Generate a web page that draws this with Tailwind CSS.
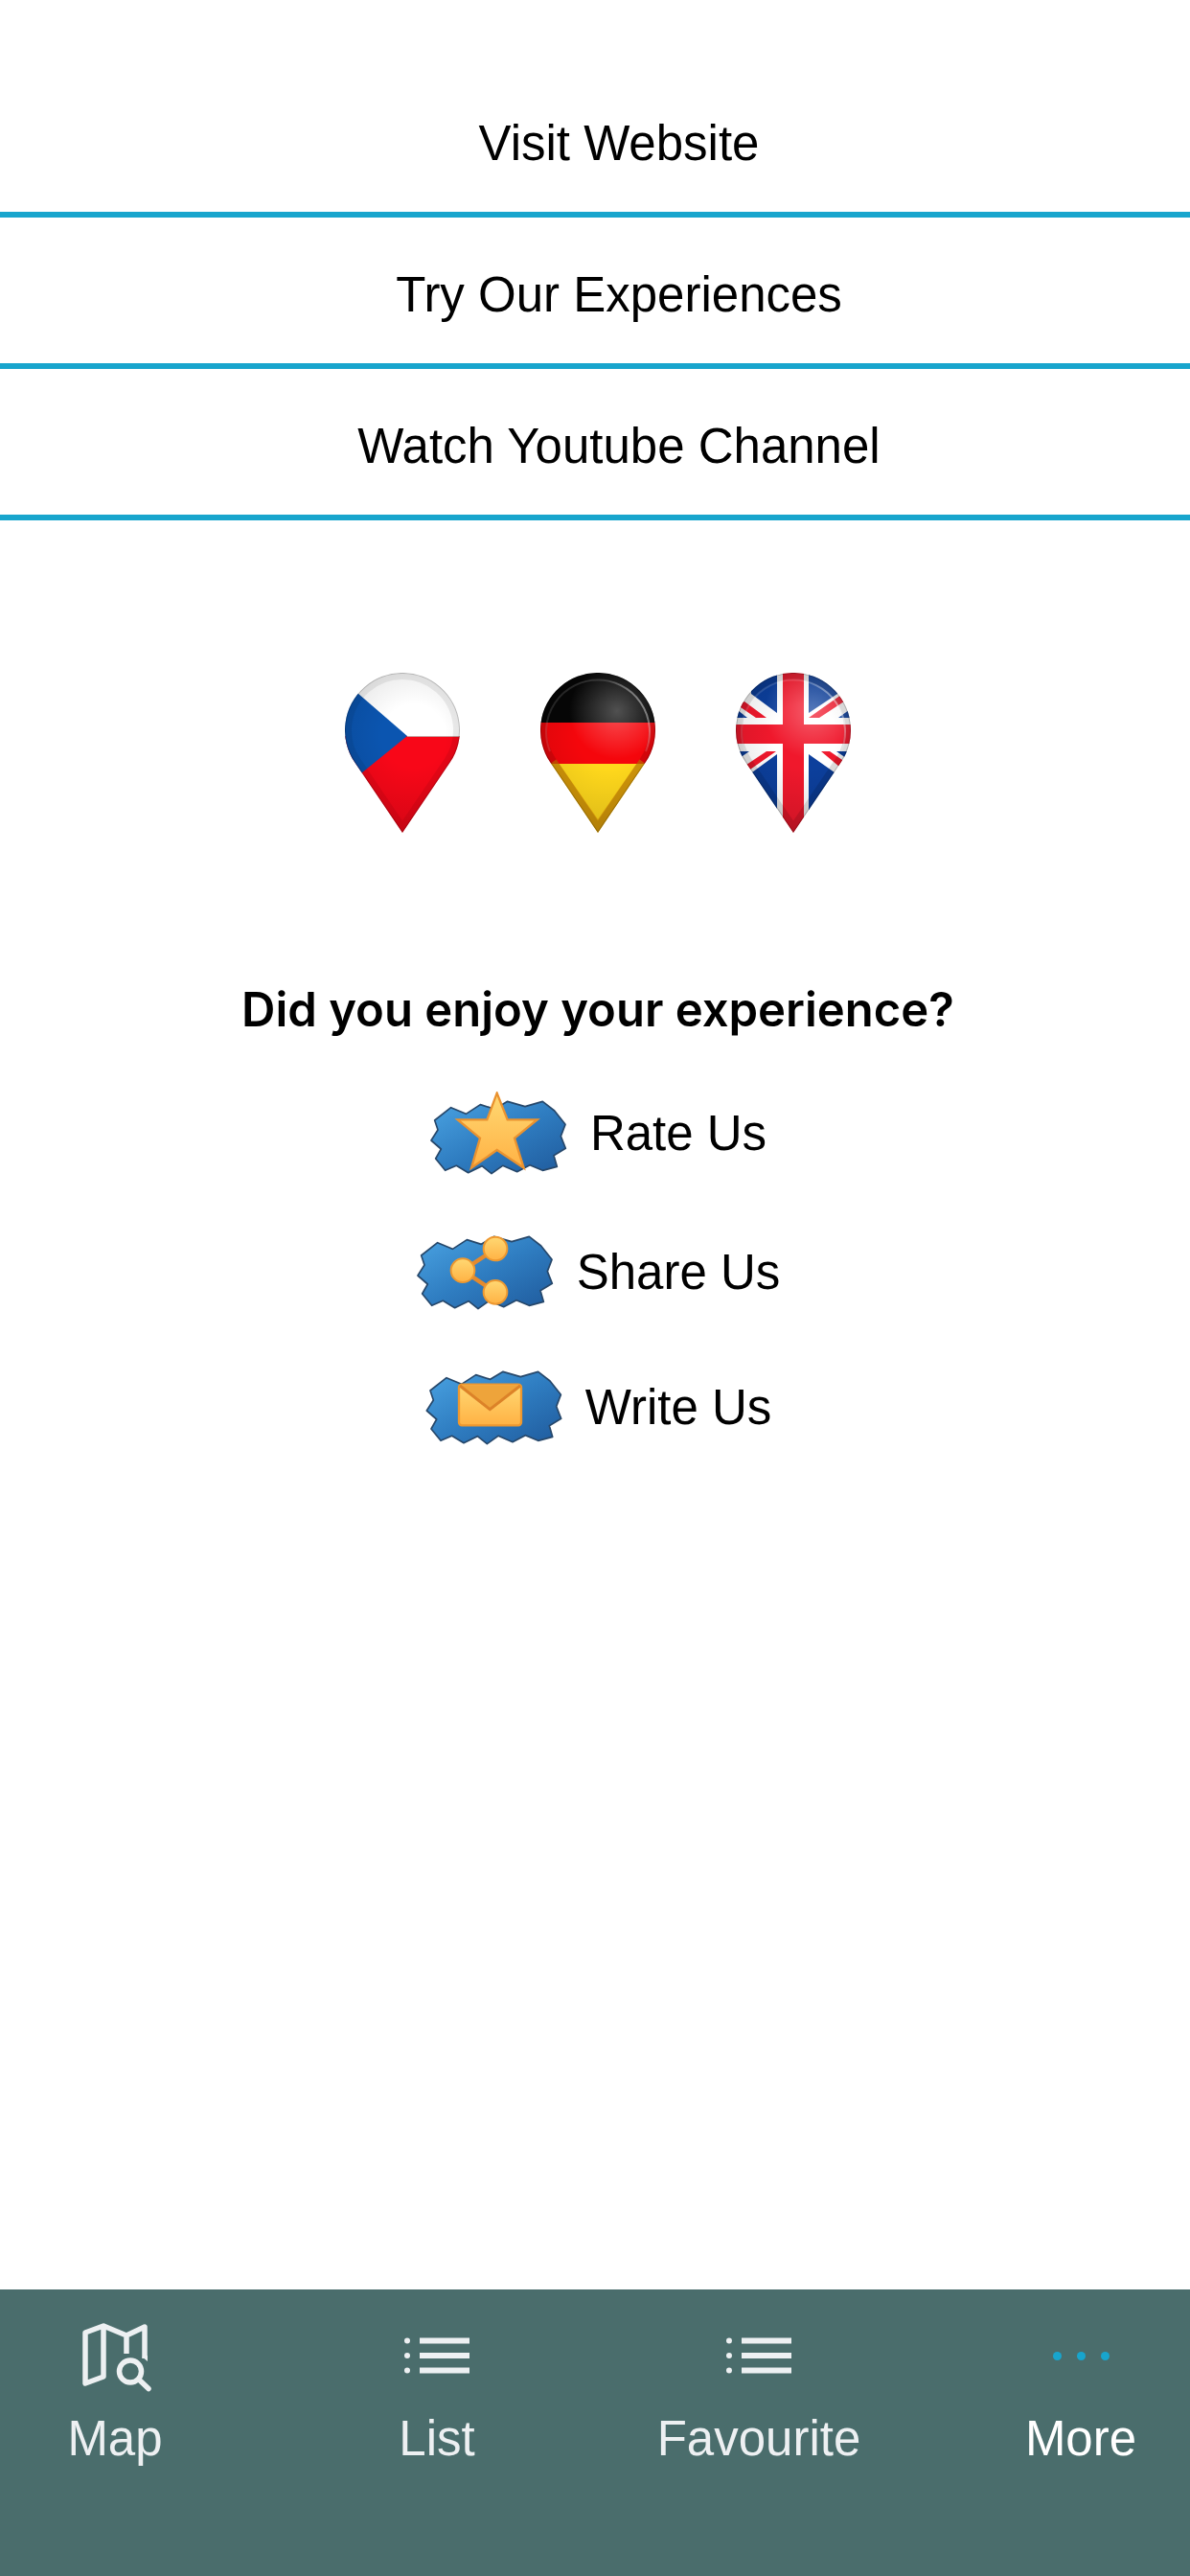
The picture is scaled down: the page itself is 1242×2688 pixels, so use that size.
<!DOCTYPE html>
<html lang="en">
<head>
<meta charset="utf-8">
<meta name="viewport" content="width=device-width, initial-scale=1">
<title>More</title>
<script src="https://cdn.jsdelivr.net/npm/@tailwindcss/browser@4"></script>
</head>
<body class="flex min-h-screen flex-col bg-white font-['Liberation_Sans',Arial,sans-serif] text-[51px] leading-[60px] text-black">

<!-- Shared shapes and paints -->
<svg class="absolute size-0" aria-hidden="true">
  <defs>
    <path id="pin" d="M60 167 L10.3 93.6 A60 60 0 1 1 109.7 93.6 Z"/>
    <clipPath id="pin-clip"><use href="#pin"/></clipPath>
    <radialGradient id="shine" gradientUnits="userSpaceOnUse" cx="80" cy="40" r="50">
      <stop offset="0" stop-color="#fff" stop-opacity=".3"/>
      <stop offset="1" stop-color="#fff" stop-opacity="0"/>
    </radialGradient>
    <radialGradient id="shade" gradientUnits="userSpaceOnUse" cx="72" cy="66" r="110">
      <stop offset=".3" stop-color="#000" stop-opacity="0"/>
      <stop offset="1" stop-color="#000" stop-opacity=".16"/>
    </radialGradient>
    <linearGradient id="rim" x1="0" y1=".6" x2="1" y2=".2">
      <stop offset="0" stop-color="#fff" stop-opacity=".12"/>
      <stop offset=".7" stop-color="#fff" stop-opacity=".15"/>
      <stop offset="1" stop-color="#fff" stop-opacity=".6"/>
    </linearGradient>
    <g id="gloss">
      <use href="#pin" fill="url(#shine)"/>
      <use href="#pin" fill="url(#shade)"/>
      <use href="#pin" fill="none" stroke="#000" stroke-opacity=".12" stroke-width="14"/>
      <path d="M10 82 A54 54 0 1 1 110 82" fill="none" stroke="url(#rim)" stroke-width="2"/>
      <use href="#pin" fill="none" stroke="#000" stroke-opacity=".2" stroke-width="2"/>
    </g>
    <linearGradient id="sea" x1="0" y1="0" x2="1" y2="1">
      <stop offset="0" stop-color="#4aa3e2"/>
      <stop offset=".5" stop-color="#2f7dc1"/>
      <stop offset="1" stop-color="#1f5a9c"/>
    </linearGradient>
    <linearGradient id="gold" x1="0" y1="0" x2="0" y2="1">
      <stop offset="0" stop-color="#ffd873"/>
      <stop offset="1" stop-color="#ffb244"/>
    </linearGradient>
    <path id="badge" d="M138 110 L185 130 L230 101 L275 115 L315 91 L370 107 L425 91 L462 120 L496 163 L482 200 L497 238 L460 260 L470 295 L425 307 L385 290 L345 311 L300 292 L265 317 L235 293 L192 314 L155 292 L120 307 L90 270 L107 240 L76 213 L97 180 L87 150 Z" fill="url(#sea)" stroke="#27486b" stroke-width="5" stroke-linejoin="round"/>
    <g id="list-icon">
      <path d="M16 4.500H68M16 20H68M16 35.500H68" stroke="currentColor" stroke-width="6"/>
      <circle cx="3" cy="4.500" r="3" fill="currentColor"/><circle cx="3" cy="20" r="3" fill="currentColor"/><circle cx="3" cy="35.500" r="3" fill="currentColor"/>
    </g>
  </defs>
</svg>

<main class="flex-1 pt-[69px]">
  <nav aria-label="Links" class="flex flex-col text-center">
    <a href="#website" class="border-b-6 border-[#18a5cd] pt-[51px] pb-[41px] pl-[50px]">Visit Website</a>
    <a href="#experiences" class="border-b-6 border-[#18a5cd] pt-[51px] pb-[41px] pl-[50px]">Try Our Experiences</a>
    <a href="#youtube" class="border-b-6 border-[#18a5cd] pt-[51px] pb-[41px] pl-[50px]">Watch Youtube Channel</a>
  </nav>

  <div class="flex justify-center gap-[84px] pt-[159px] pl-1.5">
    <button type="button" aria-label="Čeština">
      <svg class="h-[168px] w-[120px]" viewBox="0 0 120 168">
        <g clip-path="url(#pin-clip)">
          <path fill="#fff" d="M0 0H120V66H0z"/>
          <path fill="#f80718" d="M0 66H120V168H0z"/>
          <path fill="#0b55b0" d="M65 66L-10 1V127z"/>
          <path d="M65 66.500H120" stroke="#c9a0a0" stroke-width="1"/>
          <use href="#pin" fill="url(#shade)"/>
          <use href="#pin" fill="none" stroke="#000" stroke-opacity=".07" stroke-width="14"/>
          <use href="#pin" fill="none" stroke="#000" stroke-opacity=".18" stroke-width="2"/>
        </g>
      </svg>
    </button>
    <button type="button" aria-label="Deutsch">
      <svg class="h-[168px] w-[120px]" viewBox="0 0 120 168">
        <g clip-path="url(#pin-clip)">
          <path fill="#060606" d="M0 0H120V52H0z"/>
          <path fill="#f5060c" d="M0 52H120V95H0z"/>
          <path fill="#ffd81c" d="M0 95H120V168H0z"/>
          <path fill="none" stroke="#e08a00" stroke-opacity=".6" stroke-width="16" d="M10 95L60 167L110 95"/>
          <use href="#gloss"/>
        </g>
      </svg>
    </button>
    <button type="button" aria-label="English">
      <svg class="h-[168px] w-[120px]" viewBox="0 0 120 168">
        <g clip-path="url(#pin-clip)">
          <path fill="#fff" d="M0 0H120V168H0z"/>
          <path fill="#0c3f9c" d="M43 0V42L16 22V0zM76 0V42L106 22V0zM-2 36L12 47H-2zM107 47H122V36zM-2 82H14L-2 93zM105 82H122V94zM43 85L10 109V168H43zM76 85L110 109V168H76z"/>
          <path fill="#f0182c" d="M9 30L32 47H21L2 34zM76 47L110 23L116 28L87 47zM32 82H42L12 103L8 98zM89 82H98L114 93L108 98zM49 0H71V168H49zM0 54H120V74H0z"/>
          <use href="#gloss"/>
        </g>
      </svg>
    </button>
  </div>

  <h1 class="pt-[154px] pl-1.5 text-center font-['Inter',sans-serif] text-[49px] leading-[60px] font-semibold">Did you enjoy your experience?</h1>

  <div class="flex flex-col items-center gap-[63px] pt-[55px] pl-1.5">
    <button type="button" class="flex items-center gap-6">
      <svg class="h-[87px] w-36" viewBox="84 57 432 261" aria-hidden="true">
        <use href="#badge" x="14" y="-3"/>
        <path d="M296 62L329 145H422L351 203L380 296L296 240L216 296L243 203L173 145H265Z" fill="url(#gold)" stroke="#ea922f" stroke-width="7"/>
      </svg>
      <span>Rate Us</span>
    </button>
    <button type="button" class="flex items-center gap-6">
      <svg class="h-[78px] w-36" viewBox="42 87 432 234" aria-hidden="true">
        <use href="#badge" x="-28"/>
        <path d="M291 130L189 197L291 265" fill="none" stroke="#e38a2e" stroke-width="13"/>
        <g fill="url(#gold)" stroke="#ee982f" stroke-width="6"><circle cx="291" cy="129" r="37"/><circle cx="189" cy="197" r="37"/><circle cx="291" cy="265" r="37"/></g>
      </svg>
      <span>Share Us</span>
    </button>
    <button type="button" class="flex items-center gap-6">
      <svg class="h-[78px] w-36" viewBox="69 87 432 234" aria-hidden="true">
        <use href="#badge"/>
        <rect x="177" y="131" width="195" height="128" rx="9" fill="url(#gold)" stroke="#ee982f" stroke-width="7"/>
        <path d="M181 135L274 209L368 135Z" fill="#eea43b"/>
        <path d="M180 135L274 209L369 135" fill="none" stroke="#dc8228" stroke-width="9"/>
      </svg>
      <span>Write Us</span>
    </button>
  </div>
</main>

<nav aria-label="Tabs" class="flex h-[299px] justify-between bg-[#4a6d6c] pt-[33px] pl-1.5 text-[#edf0f2]">
  <a href="#map" class="flex w-[228px] flex-col items-center gap-[21px]">
    <svg class="size-[72px] overflow-visible" viewBox="0 0 72 72" fill="none" stroke="currentColor" stroke-width="5.500" stroke-linejoin="round" aria-hidden="true">
      <path d="M5 12L24 5V58L5 65ZM24 5L48 15L67 6V39M48 15V34"/>
      <path d="M64 37L70 42V36Z" fill="currentColor" stroke="none"/>
      <ellipse cx="52" cy="52.500" rx="11.500" ry="11.500"/>
      <path d="M61 61L71 70.500" stroke-linecap="round"/>
    </svg>
    <span>Map</span>
  </a>
  <a href="#list" class="flex w-[228px] flex-col items-center gap-[21px]">
    <span class="flex h-[72px] items-center"><svg class="h-10 w-[68px]" viewBox="0 0 68 40" aria-hidden="true"><use href="#list-icon"/></svg></span>
    <span>List</span>
  </a>
  <a href="#favourite" class="flex w-[228px] flex-col items-center gap-[21px]">
    <span class="flex h-[72px] items-center"><svg class="h-10 w-[68px]" viewBox="0 0 68 40" aria-hidden="true"><use href="#list-icon"/></svg></span>
    <span>Favourite</span>
  </a>
  <a href="#more" aria-current="page" class="flex w-[228px] flex-col items-center gap-[21px] text-white">
    <span class="flex h-[72px] items-center gap-4">
      <span class="size-[9px] rounded-full bg-[#18a5cd]"></span>
      <span class="size-[9px] rounded-full bg-[#18a5cd]"></span>
      <span class="size-[9px] rounded-full bg-[#18a5cd]"></span>
    </span>
    <span>More</span>
  </a>
</nav>
</body>
</html>
